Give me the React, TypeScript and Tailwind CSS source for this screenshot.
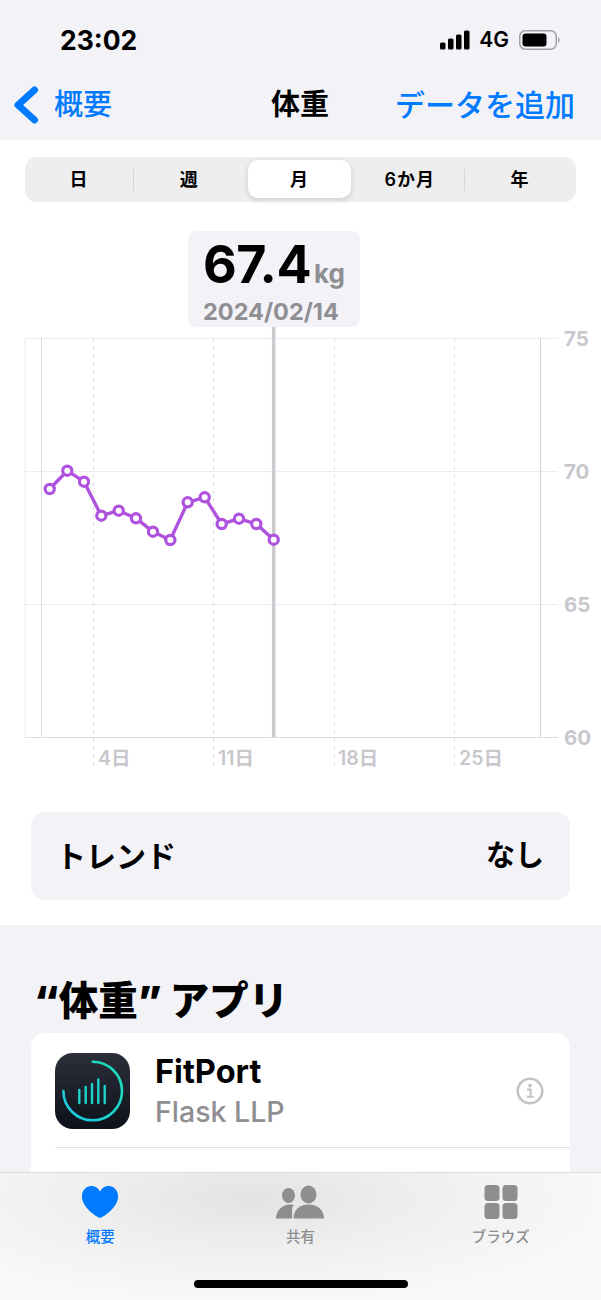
import React from 'react';

const points: [number, number][] = [
  [49.7, 489], [67.3, 470.7], [84, 481.7], [101.3, 515.7], [118.7, 510.7],
  [136, 518.3], [153, 531.7], [170.3, 540], [187.7, 502.3], [204.7, 497.3],
  [221.7, 524], [239, 518.7], [256.3, 524], [273.7, 539.7],
];

const segments = ['日', '週', '月', '6か月', '年'];

function StatusBar() {
  return (
    <div className="flex h-[70px] items-end justify-between pb-[14px] pl-[60px] pr-[40px]">
      <span className="text-[26.5px] font-bold leading-[32px] text-black">23:02</span>
      <div className="mb-[3px] flex items-center gap-[9px]">
        <svg width="30" height="20" viewBox="0 0 30 20" fill="#000">
          <rect x="0" y="12.5" width="5.5" height="7" rx="1.5" />
          <rect x="8" y="8.5" width="5.5" height="11" rx="1.5" />
          <rect x="16" y="4.5" width="5.5" height="15" rx="1.5" />
          <rect x="24" y="0.5" width="5.5" height="19" rx="1.5" />
        </svg>
        <span className="text-[21px] font-semibold leading-[26px] text-black">4G</span>
        <svg width="42" height="20" viewBox="0 0 42 20" className="ml-[1px]">
          <rect x="0.75" y="0.75" width="36.5" height="18.5" rx="5.5" fill="none" stroke="#a3a3a3" strokeWidth="1.5" />
          <rect x="3.5" y="3.5" width="24" height="13" rx="3" fill="#000" />
          <path d="M39 7 a3.5 3.5 0 0 1 0 6 z" fill="#a3a3a3" />
        </svg>
      </div>
    </div>
  );
}

function NavBar() {
  return (
    <div className="grid h-[70px] grid-cols-[257px_58px_1fr] items-start pl-[14px] pr-[26px] pt-[16px]">
      <div className="flex items-center gap-[15px]">
        <svg width="25" height="38" viewBox="0 0 25 38" fill="none" className="-mt-[1px]">
          <path d="M20.5 4 L4 19 L20.5 34" stroke="#007aff" strokeWidth="7" strokeLinecap="round" strokeLinejoin="round" />
        </svg>
        <span className="text-[29px] font-medium leading-[38px] text-[#007aff]">概要</span>
      </div>
      <span className="text-[29px] font-bold leading-[38px] text-black">体重</span>
      <span className="justify-self-end whitespace-nowrap text-[30px] font-medium leading-[38px] text-[#007aff]">データを追加</span>
    </div>
  );
}

function SegmentedControl() {
  return (
    <div className="mx-[25px] mt-[17px] grid h-[45px] grid-cols-5 rounded-[12px] bg-[#eeeeef]">
      {segments.map((label, i) => (
        <div key={label} className="relative flex items-center justify-center pr-[2px]">
          {i === 2 && (
            <div className="absolute bottom-[4px] left-[3px] right-[5px] top-[3px] rounded-[10px] bg-white shadow-[0_2px_6px_rgba(0,0,0,0.14)]" />
          )}
          {(i === 0 || i === 3) && (
            <div className="absolute bottom-[11px] right-[1px] top-[12px] w-[1px] bg-[#d6d6d8]" />
          )}
          <span className="relative text-[18px] font-semibold leading-[22px] tracking-[1px] text-black">{label}</span>
        </div>
      ))}
    </div>
  );
}

function Chart() {
  const line = points.map(([x, y]) => `${x},${y}`).join(' ');
  return (
    <div className="relative mt-[23px] h-[565px]">
      <svg width="601" height="565" viewBox="0 225 601 565" className="absolute left-0 top-0">
        {[338, 471, 604].map((y) => (
          <line key={y} x1="25" x2="558" y1={y + 0.5} y2={y + 0.5} stroke="#ececee" strokeWidth="1" />
        ))}
        <line x1="25" x2="558" y1="737.5" y2="737.5" stroke="#dedee0" strokeWidth="1" />
        <line x1="25" x2="25" y1="338" y2="737" stroke="#ececee" strokeWidth="1" />
        <line x1="41.5" x2="41.5" y1="338" y2="737" stroke="#dcdcdf" strokeWidth="1" />
        <line x1="540.5" x2="540.5" y1="338" y2="737" stroke="#d4d4d8" strokeWidth="1" />
        {[93, 213, 334, 454].map((x) => (
          <line key={x} x1={x + 0.5} x2={x + 0.5} y1="338" y2="768" stroke="#e2e2e5" strokeWidth="1" strokeDasharray="4 4" />
        ))}
        <line x1="273.7" x2="273.7" y1="327" y2="737" stroke="#cbcbd1" strokeWidth="3.5" />
        <polyline points={line} fill="none" stroke="#af52de" strokeWidth="3.4" strokeLinejoin="round" />
        {points.map(([x, y]) => (
          <circle key={x} cx={x} cy={y} r="4.6" fill="#fff" stroke="#af52de" strokeWidth="3.2" />
        ))}
      </svg>

      {/* selected value bubble */}
      <div className="absolute left-[188px] top-[6px] flex h-[96px] w-[172px] flex-col rounded-[8px] bg-[#f2f2f7] pl-[15px] pt-[6px]">
        <div className="flex items-baseline">
          <span className="text-[52px] font-bold leading-[56px] tracking-[-0.5px] text-black">67.4</span>
          <span className="ml-[3px] text-[26px] font-bold leading-[28px] text-[#8e8e93]">kg</span>
        </div>
        <span className="mt-[5px] text-[23.5px] font-bold leading-[28px] text-[#8e8e93]">2024/02/14</span>
      </div>

      {[['75', 99], ['70', 232], ['65', 365], ['60', 498]].map(([label, top]) => (
        <span
          key={label}
          className="absolute left-[564px] text-[20.5px] font-bold leading-[30px] text-[#c7c7cc]"
          style={{ top: Number(top) }}
        >
          {label}
        </span>
      ))}
      {[['4日', 98], ['11日', 218], ['18日', 338], ['25日', 459]].map(([label, left]) => (
        <span
          key={label}
          className="absolute top-[521px] text-[19.5px] font-semibold leading-[24px] text-[#c7c7cc]"
          style={{ left: Number(left) }}
        >
          {label}
        </span>
      ))}
    </div>
  );
}

function AppIcon() {
  return (
    <svg width="75" height="76" viewBox="0 0 75 76" className="shrink-0">
      <defs>
        <linearGradient id="iconBg" x1="0" y1="0" x2="0" y2="1">
          <stop offset="0" stopColor="#2a2f3a" />
          <stop offset="1" stopColor="#0d1119" />
        </linearGradient>
        <linearGradient id="ring" x1="1" y1="0" x2="0" y2="1">
          <stop offset="0" stopColor="#1fdcb2" />
          <stop offset="1" stopColor="#1cc8e4" />
        </linearGradient>
      </defs>
      <rect width="75" height="76" rx="18" fill="url(#iconBg)" />
      <path d="M37.7 8.7 A29.3 29.3 0 1 1 8.4 38" fill="none" stroke="url(#ring)" strokeWidth="2.6" strokeLinecap="round" />
      <g stroke="#1cd4cc" strokeWidth="2.4" strokeLinecap="round">
        <line x1="24.3" x2="24.3" y1="37" y2="50" />
        <line x1="30.7" x2="30.7" y1="34" y2="50" />
        <line x1="37" x2="37" y1="31" y2="50" />
        <line x1="43.3" x2="43.3" y1="26.5" y2="50" />
        <line x1="49.7" x2="49.7" y1="33" y2="50" />
      </g>
    </svg>
  );
}

function AppsSection() {
  return (
    <div className="flex-1 overflow-hidden bg-[#f2f2f7]">
      <h2 className="ml-[34px] mt-[51px] text-[39.5px] font-black leading-[50px] text-black">“体重” アプリ</h2>
      <div className="mx-[31px] mt-[7px] h-[200px] rounded-t-[14px] bg-white pl-[24px] pt-[20px]">
        <div className="flex h-[76px] items-center gap-[25px] pr-[26px]">
          <AppIcon />
          <div className="h-[76px] flex-1">
            <div className="text-[32.5px] font-bold leading-[38px] text-black">FitPort</div>
            <div className="mt-[2px] text-[28.5px] font-medium leading-[38px] text-[#8e8e93]">Flask LLP</div>
          </div>
          <svg width="28" height="28" viewBox="0 0 28 28" fill="none">
            <circle cx="14" cy="14" r="12.3" stroke="#c4c4c4" strokeWidth="2.6" />
            <circle cx="14" cy="8.6" r="1.9" fill="#c4c4c4" />
            <path d="M11 12.6 H14.6 V19.6 M10.8 19.8 H17.6" stroke="#c4c4c4" strokeWidth="2.1" />
          </svg>
        </div>
        <div className="mt-[18px] h-[1px] bg-[#dfdfe2]" />
      </div>
    </div>
  );
}

function TabBar() {
  return (
    <div className="relative h-[128px] shrink-0 border-t border-[#dcdcdf] bg-[radial-gradient(ellipse_at_42%_20%,#e3e3e3_0%,#efefef_35%,#f9f9f9_75%)]">
      <div className="grid grid-cols-3 pt-[12px]">
        <div className="flex flex-col items-center">
          <svg width="38" height="34" viewBox="0 0 38 36" fill="#007aff" preserveAspectRatio="none">
            <path d="M19 35 C17.5 35 4 26.5 1.4 16 C-0.6 7.5 4 1 10.5 1 C14.5 1 17.5 3.5 19 7 C20.5 3.5 23.5 1 27.5 1 C34 1 38.6 7.5 36.6 16 C34 26.5 20.5 35 19 35 Z" />
          </svg>
          <span className="mt-[8px] text-[14.5px] font-medium leading-[20px] text-[#007aff]">概要</span>
        </div>
        <div className="flex flex-col items-center">
          <svg width="50" height="34" viewBox="0 0 50 34" fill="#8e8e8e">
            <ellipse cx="13.5" cy="10.5" rx="6.5" ry="7.5" />
            <ellipse cx="33.5" cy="9.5" rx="8" ry="9" />
            <path d="M1 33.5 C1 26 7 19.5 15 19.5 C16.5 19.5 18 19.8 19 20.2 C15.5 23 18 27 17 33.5 Z" />
            <path d="M18.5 33.5 C18.5 25.5 24 19.5 33.5 19.5 C43 19.5 49 25.5 49 33.5 Z" />
          </svg>
          <span className="mt-[8px] text-[14.5px] font-medium leading-[20px] text-[#8e8e8e]">共有</span>
        </div>
        <div className="flex flex-col items-center">
          <svg width="34" height="34" viewBox="0 0 34 34" fill="#8e8e8e">
            <rect x="0.5" y="0" width="15" height="16" rx="3.5" />
            <rect x="18.5" y="0" width="15" height="16" rx="3.5" />
            <rect x="0.5" y="18" width="15" height="16" rx="3.5" />
            <rect x="18.5" y="18" width="15" height="16" rx="3.5" />
          </svg>
          <span className="mt-[8px] text-[14.5px] font-medium leading-[20px] text-[#8e8e8e]">ブラウズ</span>
        </div>
      </div>
      <div className="absolute bottom-[12px] left-[194px] h-[8px] w-[214px] rounded-full bg-black" />
    </div>
  );
}

export default function App() {
  return (
    <div className="flex h-[1300px] w-full flex-col overflow-hidden bg-white font-['Inter','Noto_Sans_CJK_JP',sans-serif]">
      <div className="bg-[#f2f2f7]">
        <StatusBar />
        <NavBar />
      </div>
      <div className="bg-white pb-[25px]">
        <SegmentedControl />
        <Chart />
        <div className="mx-[31px] mt-[22px] flex h-[88px] items-center justify-between rounded-[14px] bg-[#f2f2f7] pl-[25px] pr-[26px]">
          <span className="text-[30px] font-semibold text-black">トレンド</span>
          <span className="text-[29px] font-semibold text-black">なし</span>
        </div>
      </div>
      <AppsSection />
      <TabBar />
    </div>
  );
}
